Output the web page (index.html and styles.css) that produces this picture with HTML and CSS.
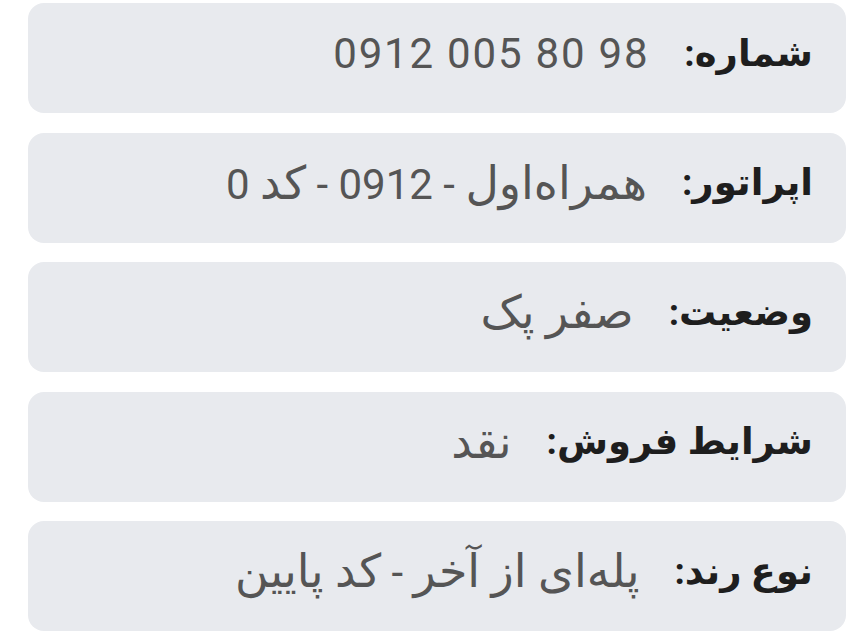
FILE: index.html
```html
<!DOCTYPE html>
<html lang="fa" dir="rtl">
<head>
<meta charset="utf-8">
<link rel="stylesheet" href="styles.css">
</head>
<body>
<div class="list">
  <div class="card"><span class="label">شماره:</span><span class="value num" dir="ltr">0912 005 80 98</span></div>
  <div class="card"><span class="label">اپراتور:</span><span class="value"><span class="fa">همراه‌اول</span> - 0912 - <span class="fa">کد</span> 0</span></div>
  <div class="card"><span class="label">وضعیت:</span><span class="value"><span class="fa">صفر پک</span></span></div>
  <div class="card"><span class="label">شرایط فروش:</span><span class="value"><span class="fa">نقد</span></span></div>
  <div class="card"><span class="label">نوع رند:</span><span class="value"><span class="fa">پله‌ای از آخر</span> - <span class="fa">کد پایین</span></span></div>
</div>
</body>
</html>
```
FILE: styles.css
```css
html, body {
  margin: 0;
  background: #ffffff;
}
body {
  font-family: Roboto, "DejaVu Sans", sans-serif;
}
.list {
  display: flex;
  flex-direction: column;
  gap: 19.5px;
  padding: 3px 16px 0 28px;
}
.card {
  height: 110px;
  box-sizing: border-box;
  background: #e8eaee;
  border-radius: 16px;
  display: flex;
  align-items: center;
  gap: 35px;
  padding: 0 33px 10px 33px;
}
.label {
  font-weight: bold;
  font-size: 37px;
  color: #1e1e1e;
}
.value {
  font-size: 42px;
  color: #555555;
}
.fa {
  font-size: 46px;
}
.num {
  unicode-bidi: isolate;
  letter-spacing: 1.8px;
}
```
